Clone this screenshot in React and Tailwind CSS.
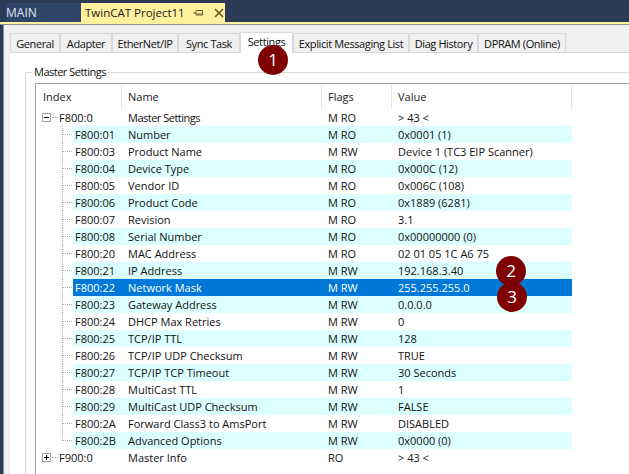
const rows = [
  ["F800:01", "Number", "M RO", "0x0001 (1)"],
  ["F800:03", "Product Name", "M RW", "Device 1 (TC3 EIP Scanner)"],
  ["F800:04", "Device Type", "M RO", "0x000C (12)"],
  ["F800:05", "Vendor ID", "M RO", "0x006C (108)"],
  ["F800:06", "Product Code", "M RO", "0x1889 (6281)"],
  ["F800:07", "Revision", "M RO", "3.1"],
  ["F800:08", "Serial Number", "M RO", "0x00000000 (0)"],
  ["F800:20", "MAC Address", "M RO", "02 01 05 1C A6 75"],
  ["F800:21", "IP Address", "M RW", "192.168.3.40"],
  ["F800:22", "Network Mask", "M RW", "255.255.255.0"],
  ["F800:23", "Gateway Address", "M RW", "0.0.0.0"],
  ["F800:24", "DHCP Max Retries", "M RW", "0"],
  ["F800:25", "TCP/IP TTL", "M RW", "128"],
  ["F800:26", "TCP/IP UDP Checksum", "M RW", "TRUE"],
  ["F800:27", "TCP/IP TCP Timeout", "M RW", "30 Seconds"],
  ["F800:28", "MultiCast TTL", "M RW", "1"],
  ["F800:29", "MultiCast UDP Checksum", "M RW", "FALSE"],
  ["F800:2A", "Forward Class3 to AmsPort", "M RW", "DISABLED"],
  ["F800:2B", "Advanced Options", "M RW", "0x0000 (0)"],
];
const tabs = [
  ["General", "w-[50px]"],
  ["Adapter", "w-[52px]"],
  ["EtherNet/IP", "w-[66px]"],
  ["Sync Task", "w-[62px]"],
  ["Settings", "w-[53px]"],
  ["Explicit Messaging List", "w-[116px]"],
  ["Diag History", "w-[69px]"],
  ["DPRAM (Online)", "w-[88px]"],
];
function Expander({ open }) {
  return (
    <div className="relative w-[9px] h-[9px] border border-[#a0a0a0] bg-white shrink-0">
      <div className="absolute left-[1px] top-[3px] w-[5px] h-[1px] bg-black" />
      {!open && <div className="absolute left-[3px] top-[1px] w-[1px] h-[5px] bg-black" />}
    </div>
  );
}
function Badge({ n, className }) {
  return (
    <div className={`absolute w-[30px] h-[30px] rounded-full bg-[#7f0000] text-white flex items-center justify-center text-[17px] ${className}`}>
      {n}
    </div>
  );
}
export default function App() {
  return (
    <div className="relative w-[629px] h-[474px] overflow-hidden bg-[#2b3a55] flex flex-col text-[11px] text-[#111]" style={{ fontFamily: '"Open Sans",Roboto,sans-serif' }}>
      <div className="flex h-[22px] pl-[6px] pt-[3px] shrink-0">
        <div className="w-[75px] text-[#dfe6f2] text-[12px] leading-[19px] bg-[#2f4468]">MAIN</div>
        <div className="w-[144px] pl-[4px] bg-[#fff09e] text-[#1a1a1a] text-[11.5px] h-[19px] flex items-center whitespace-nowrap">
          <span className="w-[103px]">TwinCAT Project11</span>
          <svg width="12" height="10" viewBox="0 0 12 10" className="ml-[5px]"><path d="M0 5h3M3 2.5v5M3.5 2.5h6v4.5h-6M3.5 6h6" stroke="#6b5a2a" fill="none" /></svg>
          <svg width="10" height="10" viewBox="0 0 10 10" className="ml-[9px]"><path d="M1 1l8 8M9 1l-8 8" stroke="#6b5a2a" strokeWidth="1.7" /></svg>
        </div>
      </div>
      <div className="h-[3px] bg-[#fff09e] border-b border-[#8a8f99] shrink-0" />
      <div className="flex flex-1 min-h-0">
        <div className="w-[3px] shrink-0 bg-[#2b3a55]" />
        <div className="w-[1px] shrink-0 bg-[#8a8f99]" />
        <div className="flex-1 flex flex-col bg-[#f0f0f0] pl-[6px] min-w-0">
          <div className="flex items-end h-[28px] shrink-0 border-b border-[#d9d9d9]">
            {tabs.map(([t, w]) => (
              <div
                key={t}
                className={`${w} text-center whitespace-nowrap tracking-[-0.4px] border border-b-0 border-[#d9d9d9] ${t === "Settings" ? "h-[21px] bg-white leading-[18px] -mb-[1px]" : "h-[19px] leading-[20px]"}`}
              >
                {t}
              </div>
            ))}
          </div>
          <div className="flex-1 bg-white pl-[15px] pt-[12px] min-h-0">
            <fieldset className="border border-r-0 border-b-0 border-[#d9d9d9] h-[420px] pl-[9px] pt-[4px]">
              <legend className="-ml-[3px] px-[2px] leading-[14px] h-[14px] tracking-[-0.5px]">Master Settings</legend>
              <div className="border-t border-l border-[#a0a0a0] h-[500px]">
                <div className="flex h-[25px] leading-[23px] text-[#222] pt-[1px]">
                  <div className="w-[86px] pl-[7px] border-r border-[#e5e5e5]">Index</div>
                  <div className="w-[200px] pl-[6px] border-r border-[#e5e5e5]">Name</div>
                  <div className="w-[70px] pl-[6px] border-r border-[#e5e5e5]">Flags</div>
                  <div className="w-[180px] pl-[6px] border-r border-[#e5e5e5]">Value</div>
                </div>
                <div className="flex h-[17px] leading-[17px] items-center pl-[6px]">
                  <Expander open />
                  <div className="w-[6px] ml-[1px] border-t border-dotted border-[#a0a0a0]" />
                  <div className="w-[64px] pl-[1px]">F800:0</div>
                  <div className="w-[200px] pl-[6px] tracking-[-0.5px]">Master Settings</div>
                  <div className="w-[70px] pl-[6px]">M RO</div>
                  <div className="pl-[6px]">{"> 43 <"}</div>
                </div>
                {rows.map(([i, n, f, v], k) => {
                  const sel = i === "F800:22";
                  const last = k === rows.length - 1;
                  return (
                    <div key={i} className="flex h-[17px] leading-[17px] w-[536px]">
                      <div className="w-[26px] shrink-0" />
                      <div className={`w-[1px] border-l border-dotted border-[#b0b0b0] shrink-0 ${last ? "h-[9px]" : "h-[17px]"}`} />
                      <div className="w-[10px] shrink-0 flex items-center">
                        <div className="w-[9px] border-t border-dotted border-[#b0b0b0]" />
                      </div>
                      <div className={`flex flex-1 ${sel ? "bg-[#0078d7] text-white" : k % 2 === 0 ? "bg-[#dcffff]" : ""}`}>
                        <div className="w-[48px] pl-[2px] shrink-0">{i}</div>
                        <div className="w-[200px] pl-[7px] shrink-0 whitespace-nowrap">{n}</div>
                        <div className="w-[70px] pl-[7px] shrink-0">{f}</div>
                        <div className="pl-[7px] whitespace-nowrap">{v}</div>
                      </div>
                    </div>
                  );
                })}
                <div className="flex h-[17px] leading-[17px] items-center pl-[6px]">
                  <Expander />
                  <div className="w-[6px] ml-[1px] border-t border-dotted border-[#a0a0a0]" />
                  <div className="w-[64px] pl-[1px]">F900:0</div>
                  <div className="w-[200px] pl-[6px]">Master Info</div>
                  <div className="w-[70px] pl-[6px]">RO</div>
                  <div className="pl-[6px]">{"> 43 <"}</div>
                </div>
              </div>
            </fieldset>
          </div>
        </div>
      </div>
      <Badge n="1" className="left-[258px] top-[45px]" />
      <Badge n="2" className="left-[496px] top-[256px]" />
      <Badge n="3" className="left-[497px] top-[282px]" />
    </div>
  );
}
